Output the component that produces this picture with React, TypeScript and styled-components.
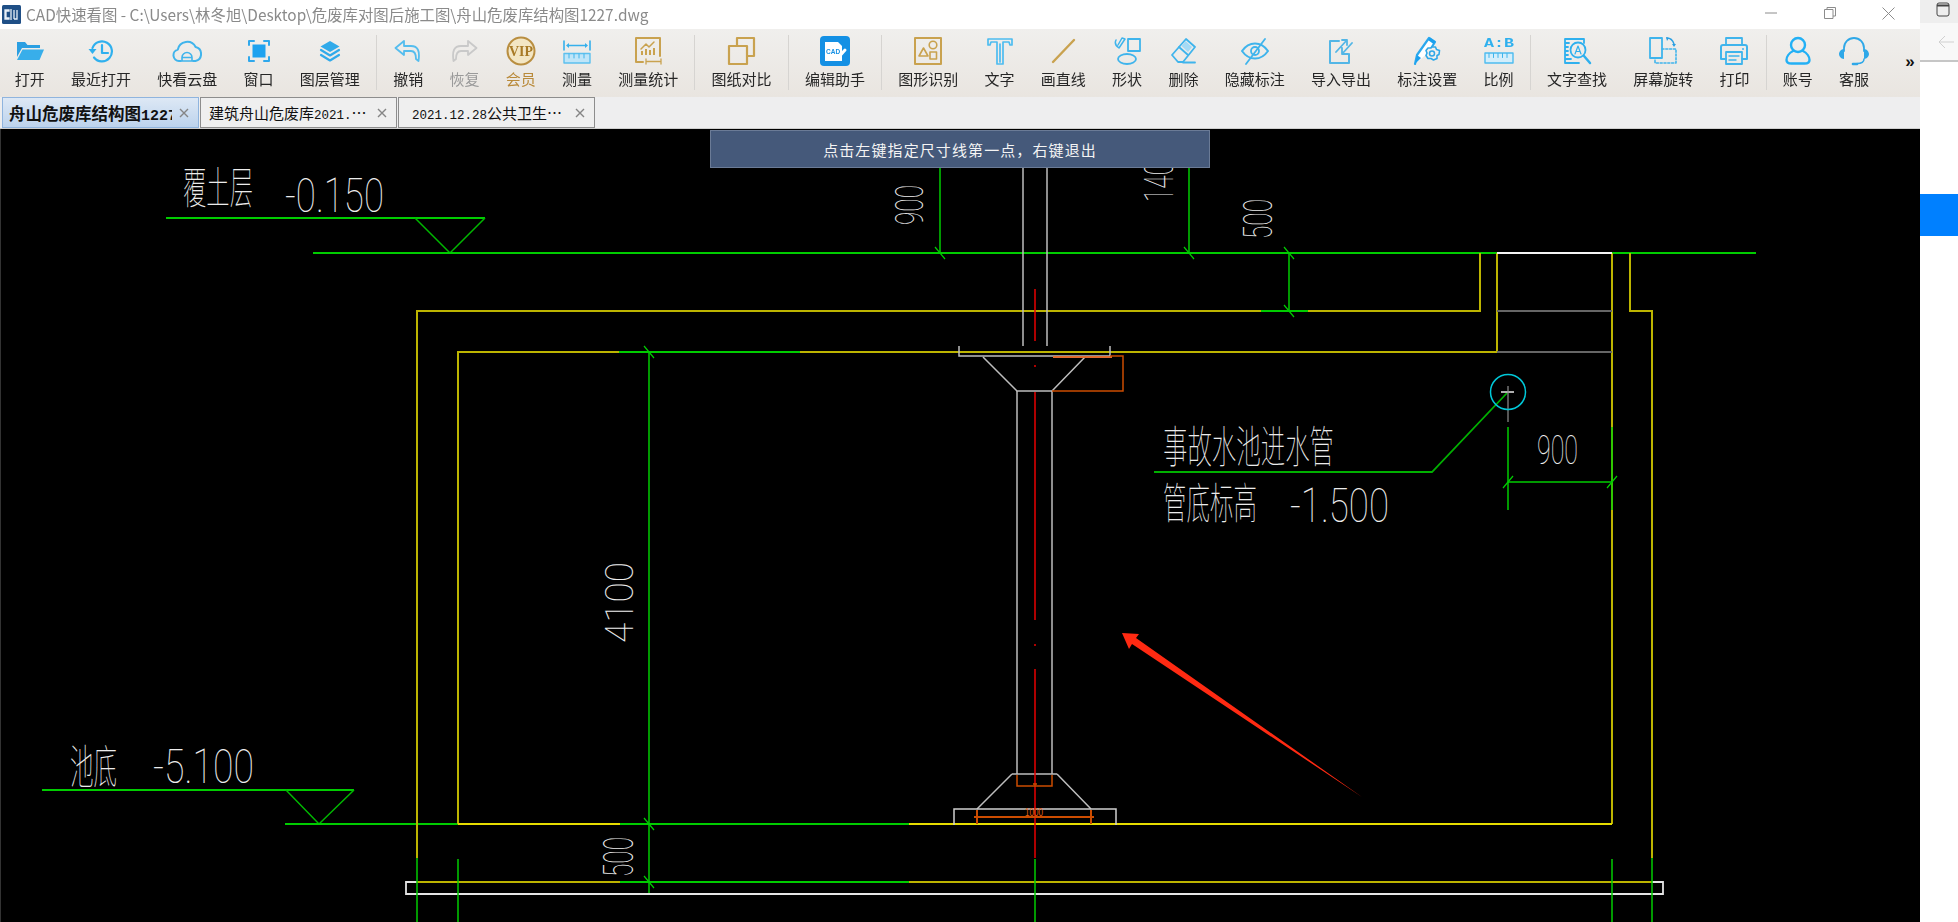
import React from "react";
import styled, { createGlobalStyle } from "styled-components";

const Global = createGlobalStyle`
  html, body { margin: 0; padding: 0; background: #fff; overflow: hidden; }
  #root { width: 1958px; height: 922px; }
`;

const CJK = `"Noto Sans CJK SC", "Liberation Sans", sans-serif`;

const Page = styled.div`
  display: grid;
  grid-template-columns: 1920px 38px;
  width: 1958px;
  height: 922px;
  font-family: ${CJK};
`;
const Main = styled.div`
  display: flex;
  flex-direction: column;
  min-width: 0;
`;
const TitleBar = styled.div`
  height: 29px;
  display: flex;
  align-items: center;
  background: #fff;
  padding-left: 2px;
  flex: none;
`;
const TitleText = styled.div`
  margin-left: 5px;
  font-size: 15.4px;
  line-height: 29px;
  color: #8a8a8a;
  white-space: nowrap;
  flex: 1;
  filter: blur(0.25px);
`;
const WinButtons = styled.div`
  display: flex;
  align-items: center;
  padding-right: 2px;
  margin-bottom: 3px;
  color: #8c8c8c;
`;
const WinButton = styled.span`
  display: flex;
  justify-content: center;
  width: 59px;
  svg { display: block; }
`;
const Toolbar = styled.div`
  height: 68px;
  flex: none;
  display: flex;
  align-items: stretch;
  padding-left: 1.5px;
  background: linear-gradient(#f0efed, #e9e5e0);
  box-sizing: border-box;
`;
const Tool = styled.div`
  display: flex;
  flex-direction: column;
  align-items: center;
  padding: 7px 13.15px 0;
  svg { display: block; width: 30px; height: 30px; filter: blur(0.3px); }
`;
const ToolLabel = styled.span<{ $tone?: string }>`
  margin-top: 3px;
  font-size: 15px;
  line-height: 20px;
  white-space: nowrap;
  color: ${(p) => p.$tone || "#262626"};
  filter: blur(0.2px);
`;
const Sep = styled.div`
  width: 1px;
  margin: 6px 3px 7px;
  background: #d6d4d1;
`;
const More = styled.div`
  margin: 23px 0 0 23px;
  font: bold 17px "Liberation Sans", sans-serif;
  color: #111;
`;
const TabBar = styled.div`
  height: 32px;
  flex: none;
  display: flex;
  gap: 1px;
  padding-left: 2px;
  box-sizing: border-box;
  background: #eeeeef;
  border-bottom: 1px solid #cfcfcf;
`;
const Tab = styled.div<{ $active?: boolean }>`
  width: 197px;
  box-sizing: border-box;
  display: flex;
  align-items: center;
  padding: 0 9px 0 ${(p) => (p.$active ? 6 : 8)}px;
  border: 1px solid ${(p) => (p.$active ? "#8fb4de" : "#8d8d8d")};
  background: ${(p) => (p.$active ? "linear-gradient(#dde8f5, #bdd3ed)" : "#efefef")};
  color: #111;
  font-size: ${(p) => (p.$active ? 16.5 : 15)}px;
  font-weight: ${(p) => (p.$active ? 700 : 400)};
`;
const TabText = styled.div<{ $indent?: number }>`
  flex: 1;
  overflow: hidden;
  white-space: nowrap;
  padding-left: ${(p) => p.$indent || 0}px;
  margin-right: 7px;
`;
const Num = styled.span<{ $large?: boolean }>`
  font-family: "Liberation Mono", monospace;
  font-size: ${(p) => (p.$large ? 15 : 12.5)}px;
`;
const TabClose = styled.svg`
  width: 10px;
  height: 10px;
  flex: none;
  stroke: #858585;
  stroke-width: 1.4;
`;
const Canvas = styled.div`
  position: relative;
  flex: 1;
  background: #000;
  overflow: hidden;
  box-shadow: inset 1px 0 #333;
  svg { display: block; }
`;
const Prompt = styled.div`
  position: absolute;
  left: 710px;
  top: 1px;
  width: 500px;
  height: 38px;
  box-sizing: border-box;
  background: #45597a;
  border: 1px solid #6b7b96;
  color: #f4f4f4;
  display: flex;
  align-items: center;
  justify-content: center;
  font-size: 15px;
  letter-spacing: 1.1px;
`;
const CadLabel = styled.text<{ $thin?: boolean }>`
  fill: #ececec;
  font-family: ${(p) => (p.$thin ? `Roboto, "Liberation Sans", sans-serif` : CJK)};
  font-weight: 100;
`;
const OrangeLabel = styled.text`
  fill: #e06010;
  font-family: "Liberation Sans", sans-serif;
`;
const Side = styled.div`
  display: flex;
  flex-direction: column;
  background: #fff;
`;
const SideTop = styled.div`
  height: 23px;
  background: #eee;
  display: flex;
  justify-content: flex-end;
  padding: 2px 8px 0 0;
  box-sizing: border-box;
`;
const SideBack = styled.div`
  height: 39px;
  box-sizing: border-box;
  background: #f8f8f8;
  border-bottom: 2px solid #c6c6c6;
  display: flex;
  align-items: center;
  justify-content: flex-end;
  padding-right: 3px;
`;
const SideActive = styled.div`
  height: 42px;
  margin-top: 132px;
  background: #0080ff;
`;

const BLUE = "#3fb4ec";
const GOLD = "#c9a24f";

type IconProps = { children: React.ReactNode };
const I = ({ children }: IconProps) => (
  <svg viewBox="0 0 30 30" fill="none" stroke={BLUE} strokeWidth="1.8" strokeLinejoin="round" strokeLinecap="round">
    {children}
  </svg>
);

const icons: Record<string, React.ReactNode> = {
  open: (
    <I>
      <path d="M2 6h8l2.5 3H25v3H7L2 21z" fill="#2a9fe2" stroke="none" />
      <path d="M7.5 13.5H29L24.5 24H2z" fill="#38aeea" stroke="none" />
    </I>
  ),
  recent: (
    <I>
      <path d="M6.5 12A10 10 0 1 1 8 21.5" strokeWidth="2.2" stroke="#2fb0ee" />
      <path d="M2.5 13h8L6.5 18z" fill="#2fb0ee" stroke="none" />
      <path d="M16 9v8h6" strokeWidth="2.2" stroke="#2fb0ee" />
    </I>
  ),
  cloud: (
    <I>
      <path d="M9 25H7a5.8 5.8 0 0 1-1.2-11.4A9.5 9.5 0 0 1 23.6 11 7.2 7.2 0 0 1 23.500 25H21" strokeWidth="2" />
      <path d="M10 25v-3.500a5 5 0 0 1 10 0V25zM10.500 21.500h9" strokeWidth="1.6" />
    </I>
  ),
  window: (
    <I>
      <path d="M5 9V5h5M20 5h5v4M25 21v4h-5M10 25H5v-4" strokeWidth="2" stroke="#2fa8ec" />
      <rect x="8.5" y="8.5" width="13" height="13" fill="#1ea2ef" stroke="none" />
    </I>
  ),
  layers: (
    <I>
      <path d="M15 5l9.5 5.5L15 16 5.5 10.500z" fill="#30aaea" stroke="none" />
      <path d="M6 14l9 5.500L24 14M6 19l9 5.500L24 19" strokeWidth="2.2" stroke="#30aaea" />
    </I>
  ),
  undo: (
    <I>
      <path d="M11 5L2.500 12 11 19v-4h7c3.500 0 5 2.500 5 8l2.500 2c1.500-10-.5-15-7.500-15H11z" stroke="#55bdee" />
    </I>
  ),
  redo: (
    <I>
      <path d="M19 5l8.500 7L19 19v-4h-7c-3.500 0-5 2.500-5 8l-2.500 2C3 15 5 10 12 10h7z" stroke="#c9c9c9" />
    </I>
  ),
  vip: (
    <I>
      <circle cx="15" cy="15" r="13.5" stroke="#b98e40" strokeWidth="2" fill="#f3e6c4" />
      <text x="15" y="20" textAnchor="middle" fontFamily="Liberation Serif, serif" fontWeight="700" fontSize="14" fill="#a87a26" stroke="none" textLength="24" lengthAdjust="spacingAndGlyphs">VIP</text>
    </I>
  ),
  measure: (
    <I>
      <path d="M2 5v9M28 5v9M6 9.500h18" strokeWidth="1.6" stroke="#35b0ec" />
      <path d="M7 7l-3 2.500L7 12zM23 7l3 2.500-3 2.500z" fill="#35b0ec" stroke="none" />
      <rect x="2" y="17.500" width="26" height="9.500" fill="#bfe5f8" stroke="#5cc0ee" strokeWidth="1.4" />
      <path d="M7 18v4M12 18v4M17 18v4M22 18v4" strokeWidth="1" />
    </I>
  ),
  stats: (
    <I>
      <path d="M10 26H3V2h24v18" stroke={GOLD} strokeWidth="2" />
      <path d="M8 13l5-5 3 3 5-5" stroke={GOLD} strokeWidth="1.500" />
      <path d="M9 19v-4M13 19v-6M17 19v-5M21 19v-7" stroke={GOLD} strokeWidth="2" strokeLinecap="butt" />
      <path d="M13 23v5M28 23v5M14 25.500h13" stroke={GOLD} strokeWidth="1.300" />
    </I>
  ),
  compare: (
    <I>
      <path d="M10 9V2h17v18h-7" stroke={GOLD} strokeWidth="2.200" />
      <rect x="2" y="10" width="18" height="18" stroke={GOLD} strokeWidth="2.200" />
    </I>
  ),
  helper: (
    <I>
      <rect x="0" y="0" width="30" height="30" rx="4" fill="#1490e4" stroke="none" />
      <path d="M5 6h13l4 4v15H5z" fill="#fff" stroke="none" />
      <text x="6" y="17.500" fontFamily="Liberation Sans, sans-serif" fontWeight="700" fontSize="6.500" fill="#1490e4" stroke="none">CAD</text>
      <path d="M17 23l8-9" stroke="#fff" strokeWidth="3" />
    </I>
  ),
  recognize: (
    <I>
      <rect x="2" y="2" width="26" height="26" stroke={GOLD} strokeWidth="2" />
      <path d="M6 20l4.500-8 4.500 8z" stroke={GOLD} strokeWidth="1.600" />
      <circle cx="20" cy="9" r="3.800" stroke={GOLD} strokeWidth="1.600" />
      <rect x="17" y="16" width="6.500" height="7" stroke={GOLD} strokeWidth="1.600" />
    </I>
  ),
  text: (
    <I>
      <path d="M3 3h24v6h-2l-1-3h-6v22h-6V6H6L5 9H3zM15 8v18" strokeWidth="1.700" stroke="#4dbcf0" />
    </I>
  ),
  line: (
    <I>
      <path d="M5 26L26 4" stroke={GOLD} strokeWidth="2.400" />
    </I>
  ),
  shape: (
    <I>
      <rect x="16" y="3" width="12" height="12" />
      <ellipse cx="15" cy="23" rx="9" ry="5" />
      <path d="M4 4c-2 4 0 6 3 8l6-9-3-1-4 7" strokeWidth="1.500" />
    </I>
  ),
  erase: (
    <I>
      <path d="M4 19L18 3l9 8-12 15H10z" />
      <path d="M11 11l9 8" />
      <path d="M13.500 10l4-5 6.500 6-4 5z" fill="#a5daf5" stroke="none" />
      <path d="M15 26.500h12" />
    </I>
  ),
  hide: (
    <I>
      <path d="M2 15c7-10 19-10 26 0-7 10-19 10-26 0z" strokeWidth="2" />
      <circle cx="15" cy="15" r="4" strokeWidth="1.800" />
      <path d="M6 28L25 3" strokeWidth="1.800" />
    </I>
  ),
  io: (
    <I>
      <path d="M13 5H4v22h19v-9" strokeWidth="2" stroke="#53b6e6" />
      <path d="M10 16L21 4h-5M21 4v5M26 7L16 18h6M16 18v-6" strokeWidth="1.800" stroke="#53b6e6" />
    </I>
  ),
  dimset: (
    <I>
      <path d="M3 28l2-9L17 2l6 4-7 11" fill="#fff" stroke="#2aa8ee" strokeWidth="2.200" />
      <path d="M3 28l2-9 4 3z" fill="#1aa0ee" stroke="none" />
      <path d="M18 1.500l5.500 4-2 2.500-5.500-4z" fill="#1aa0ee" stroke="none" />
      <path d="M20 11l3.500 0 1 2.500 3 1-.5 4-2 1 0 3-3.500 1.500-2.500-1.500-3 0-2-3 1-2.500-1-2.500 2-2.500 3 0z" strokeWidth="1.600" fill="#f0efed" stroke="#2fa8e8" />
      <circle cx="20" cy="17.500" r="2.500" stroke="#2fa8e8" strokeWidth="1.500" />
    </I>
  ),
  ratio: (
    <I>
      <text x="0" y="11" fontFamily="Liberation Mono, monospace" fontWeight="700" fontSize="12.500" fill="#2fb0ee" stroke="none" textLength="30" lengthAdjust="spacingAndGlyphs">A:B</text>
      <rect x="1" y="17" width="28" height="10" fill="#d3eefb" stroke="#4dbcf0" strokeWidth="1.400" />
      <path d="M5 17.500v4M9.500 17.500v4M14 17.500v4M18.500 17.500v4M23 17.500v4" strokeWidth="1" />
    </I>
  ),
  find: (
    <I>
      <path d="M22 7V3H3v24h14M3 7h4M3 11h3M3 15h3M3 19h3M3 23h6" strokeWidth="1.800" stroke="#2fb0ee" />
      <circle cx="16" cy="14" r="7.500" strokeWidth="1.800" stroke="#2fb0ee" />
      <path d="M13 18l3-8 3 8M14 15.500h4" strokeWidth="1.200" stroke="#2fb0ee" />
      <path d="M22 20l6 7" strokeWidth="2.500" stroke="#2fb0ee" />
    </I>
  ),
  rotate: (
    <I>
      <rect x="2" y="2" width="12" height="20" strokeWidth="1.800" />
      <path d="M14 13h14v14H7v-5" strokeWidth="1.600" strokeDasharray="2 1.800" />
      <path d="M19 2c4 0 6 3 7 6" strokeWidth="1.400" stroke="#2a9fe2" />
      <path d="M18 1l3 1-2 3zM24 8h4l-2 3z" fill="#2a9fe2" stroke="none" />
    </I>
  ),
  print: (
    <I>
      <path d="M7 9V2h16v7" strokeWidth="1.800" />
      <path d="M7 23H2V11a2 2 0 0 1 2-2h22a2 2 0 0 1 2 2v12h-5" strokeWidth="2" />
      <rect x="7" y="16" width="16" height="12" strokeWidth="1.800" />
      <path d="M10 20h10M10 24h7" strokeWidth="1.400" />
      <circle cx="24" cy="13" r="1" fill={BLUE} stroke="none" />
    </I>
  ),
  account: (
    <I>
      <circle cx="15" cy="9" r="7" strokeWidth="2.400" stroke="#22b0f5" />
      <path d="M10 15c-4 2-6.500 6-6.500 9 0 3 2 3.500 5 3.500h13c3 0 5-.5 5-3.500 0-3-2.500-7-6.500-9" strokeWidth="2.400" stroke="#22b0f5" />
    </I>
  ),
  service: (
    <I>
      <path d="M5 15v-3a10 10 0 0 1 20 0v3" strokeWidth="1.800" stroke="#2fa8e8" />
      <path d="M5 13v10C2 23 0 20 0 18s2-5 5-5zM25 13v10c3 0 5-3 5-5s-2-5-5-5z" fill="#2fa8e8" stroke="none" />
      <path d="M25 23c0 3-3 4.500-7 4.500" strokeWidth="1.500" stroke="#2fa8e8" />
      <path d="M14 28h4" strokeWidth="2.600" stroke="#2fa8e8" />
    </I>
  ),
};

type ToolDef = { key: string; label: string; tone?: string } | "sep";
const tools: ToolDef[] = [
  { key: "open", label: "打开" },
  { key: "recent", label: "最近打开" },
  { key: "cloud", label: "快看云盘" },
  { key: "window", label: "窗口" },
  { key: "layers", label: "图层管理" },
  "sep",
  { key: "undo", label: "撤销" },
  { key: "redo", label: "恢复", tone: "#9a9a9a" },
  { key: "vip", label: "会员", tone: "#b98a3a" },
  { key: "measure", label: "测量" },
  { key: "stats", label: "测量统计" },
  "sep",
  { key: "compare", label: "图纸对比" },
  "sep",
  { key: "helper", label: "编辑助手" },
  "sep",
  { key: "recognize", label: "图形识别" },
  { key: "text", label: "文字" },
  { key: "line", label: "画直线" },
  { key: "shape", label: "形状" },
  { key: "erase", label: "删除" },
  { key: "hide", label: "隐藏标注" },
  { key: "io", label: "导入导出" },
  { key: "dimset", label: "标注设置" },
  { key: "ratio", label: "比例" },
  "sep",
  { key: "find", label: "文字查找" },
  { key: "rotate", label: "屏幕旋转" },
  { key: "print", label: "打印" },
  "sep",
  { key: "account", label: "账号" },
  { key: "service", label: "客服" },
];

const G = "#00cc00";
const Y = "#bcb400";
const YB = "#e6dc00";
const W = "#bdbdbd";
const WB = "#e4e4e4";
const R = "#e80000";
const O = "#cc4c00";

const paths: { d: string; c: string; w?: number }[] = [
  // elevation marks
  { d: "M166 218H485", c: G, w: 2 },
  { d: "M415 218L450 253L485 218", c: "#00b800", w: 1.5 },
  { d: "M313 253H1756", c: G, w: 2 },
  { d: "M42 790H354", c: G, w: 2 },
  { d: "M286 790L319 824L354 790", c: "#00b800", w: 1.5 },
  { d: "M285 824H458M620 824H909", c: G, w: 2 },
  // walls
  { d: "M417 858V311H1480V253", c: Y, w: 2 },
  { d: "M458 824V352H1497V253", c: Y, w: 2 },
  { d: "M1630 253V311H1652V858", c: Y, w: 2 },
  { d: "M1612 253V824", c: Y, w: 2 },
  { d: "M458 824H620M909 824H1612", c: YB, w: 2 },
  { d: "M417 882H620M909 882H1652", c: Y, w: 2 },
  { d: "M620 882H909", c: G, w: 2 },
  { d: "M619 352H800", c: G, w: 2 },
  { d: "M1261 311H1308", c: G, w: 2 },
  // slab
  { d: "M417 882H406V894H1663V882H1652", c: WB, w: 1.8 },
  // opening
  { d: "M1497 253H1612", c: "#f4f4f4", w: 2 },
  { d: "M1497 311H1612M1497 352H1612", c: "#666", w: 2 },
  // dimension lines
  { d: "M940 167V253M1189 167V253M1289 253V311M649 352V893", c: G, w: 1.5 },
  { d: "M935 247L945 259M1184 247L1194 259M1284 247L1294 259M1284 305L1294 317M644 346L654 358M644 818L654 830M644 876L654 888", c: G, w: 1.2 },
  { d: "M1508 427V510M1612 427V510M1508 482H1612", c: G, w: 1.5 },
  { d: "M1503 488L1513 476M1607 488L1617 476", c: G, w: 1.2 },
  // lower extension lines
  { d: "M417 858V922M458 859V922M1035 859V922M1612 859V922M1652 858V922", c: G, w: 1.5 },
  // pipe
  { d: "M1023 167V346M1047 167V346", c: W, w: 1.5 },
  { d: "M959 346V356H1110V346", c: W, w: 1.5 },
  { d: "M983 357L1017 391H1052L1085 357", c: W, w: 1.5 },
  { d: "M1017 391V774M1052 391V774", c: W, w: 1.5 },
  { d: "M1012 774H1057M1012 774L977 809M1057 774L1091 809", c: W, w: 1.5 },
  { d: "M954 825V809H1116V825", c: "#d0d0d0", w: 1.5 },
  // centre line
  { d: "M1035 289V341M1035 365V367M1035 392V620M1035 644V646M1035 669V858", c: R, w: 1.5 },
  // orange dims
  { d: "M1053 357H1112", c: "#e06a30", w: 2 },
  { d: "M1110 356H1123V391H1052M1123 372V378", c: O, w: 1.5 },
  { d: "M1017 775V786H1052V775M1033 784H1037", c: O, w: 1.5 },
  { d: "M974 817H1094M977 810V824M1091 810V824", c: O, w: 2 },
  // leader
  { d: "M1507 393L1432 472H1154", c: "#00b000", w: 1.8 },
  { d: "M1501 392H1514", c: "#e8e8e8", w: 1.5 },
  { d: "M1508 386V422", c: "#909090", w: 1.2 },
];

type Cad = { t: string; x: number; y: number; w: number; fs: number; thin?: boolean; rot?: boolean };
const cadTexts: Cad[] = [
  { t: "覆土层", x: 183, y: 204, w: 70, fs: 44 },
  { t: "-0.150", x: 285, y: 212, w: 99, fs: 49, thin: true },
  { t: "池底", x: 70, y: 783, w: 47, fs: 46 },
  { t: "-5.100", x: 153, y: 783, w: 101, fs: 49, thin: true },
  { t: "事故水池进水管", x: 1163, y: 463, w: 171, fs: 44 },
  { t: "管底标高", x: 1163, y: 519, w: 94, fs: 43 },
  { t: "-1.500", x: 1290, y: 522, w: 99, fs: 48, thin: true },
  { t: "900", x: 1537, y: 464, w: 41, fs: 41, thin: true },
  { t: "900", x: 923, y: 225, w: 40, fs: 39, thin: true, rot: true },
  { t: "140", x: 1173, y: 202, w: 40, fs: 40, thin: true, rot: true },
  { t: "500", x: 1272, y: 239, w: 40, fs: 40, thin: true, rot: true },
  { t: "4100", x: 633, y: 643, w: 81, fs: 39, thin: true, rot: true },
  { t: "500", x: 633, y: 877, w: 40, fs: 42, thin: true, rot: true },
];

const Drawing = () => (
  <svg width="1920" height="793" viewBox="0 129 1920 793" fill="none">
    {paths.map((p, i) => (
      <path key={i} d={p.d} stroke={p.c} strokeWidth={p.w || 1} />
    ))}
    <circle cx="1508" cy="392" r="17.500" stroke="#00c8d8" strokeWidth="1.500" />
    {cadTexts.map((c, i) => (
      <CadLabel
        key={i}
        $thin={c.thin}
        x={c.x}
        y={c.y}
        fontSize={c.fs}
        textLength={c.w}
        lengthAdjust="spacingAndGlyphs"
        transform={c.rot ? `rotate(-90 ${c.x} ${c.y})` : undefined}
      >
        {c.t}
      </CadLabel>
    ))}
    <OrangeLabel x="1025" y="816" fontSize="11" textLength="18" lengthAdjust="spacingAndGlyphs">1000</OrangeLabel>
    <path d="M1122 633L1139 634L1136 638L1362 797L1132 644L1129 649Z" fill="#ff2a12" />
  </svg>
);

const CloseX = () => (
  <TabClose viewBox="0 0 10 10">
    <path d="M1 1l8 8M9 1l-8 8" />
  </TabClose>
);

export default function App() {
  return (
    <Page>
      <Global />
      <Main>
        <TitleBar>
          <svg width="19" height="19" viewBox="0 0 19 19">
            <rect width="19" height="19" rx="1.500" fill="#1f4f86" />
            <path d="M3 5h4v1H4v7h3v1H3zM9 4v11M12 5v9M15 5v9h-3" stroke="#e8f0f8" strokeWidth="1.300" fill="none" />
          </svg>
          <TitleText>CAD快速看图 - C:\Users\林冬旭\Desktop\危废库对图后施工图\舟山危废库结构图1227.dwg</TitleText>
          <WinButtons>
            <WinButton>
              <svg width="12" height="12" viewBox="0 0 12 12" stroke="currentColor"><path d="M0 6h12" /></svg>
            </WinButton>
            <WinButton>
              <svg width="12" height="12" viewBox="0 0 12 12" stroke="currentColor" fill="none"><path d="M.5 2.500h8.500v9H.5zM3 2.500V.5h8.500v8.500H9" /></svg>
            </WinButton>
            <WinButton>
              <svg width="13" height="13" viewBox="0 0 13 13" stroke="currentColor"><path d="M.5.5l12 12M12.500.5l-12 12" /></svg>
            </WinButton>
          </WinButtons>
        </TitleBar>
        <Toolbar>
          {tools.map((t, i) =>
            t === "sep" ? (
              <Sep key={i} />
            ) : (
              <Tool key={t.key}>
                {icons[t.key]}
                <ToolLabel $tone={t.tone}>{t.label}</ToolLabel>
              </Tool>
            )
          )}
          <More>»</More>
        </Toolbar>
        <TabBar>
          <Tab $active>
            <TabText>舟山危废库结构图<Num $large>1227</Num></TabText>
            <CloseX />
          </Tab>
          <Tab>
            <TabText>建筑舟山危废库<Num>2021.</Num>…</TabText>
            <CloseX />
          </Tab>
          <Tab>
            <TabText $indent={5}><Num>2021.12.28</Num>公共卫生…</TabText>
            <CloseX />
          </Tab>
        </TabBar>
        <Canvas>
          <Drawing />
          <Prompt>点击左键指定尺寸线第一点，右键退出</Prompt>
        </Canvas>
      </Main>
      <Side>
        <SideTop>
          <svg width="14" height="15" viewBox="0 0 14 15" fill="none" stroke="#444">
            <rect x="1" y="1" width="12" height="13" rx="2" />
            <path d="M1 3.500h12" strokeWidth="2" />
          </svg>
        </SideTop>
        <SideBack>
          <svg width="17" height="14" viewBox="0 0 17 14" fill="none" stroke="#d0d0d0">
            <path d="M16 7H1M7 1L1 7l6 6" />
          </svg>
        </SideBack>
        <SideActive />
      </Side>
    </Page>
  );
}
